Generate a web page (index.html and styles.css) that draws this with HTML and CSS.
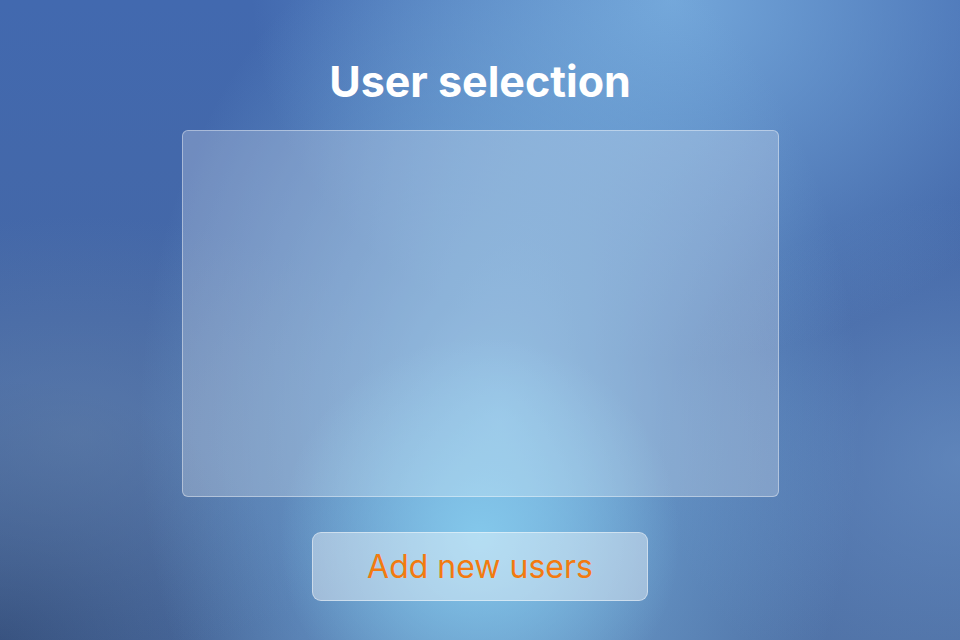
FILE: index.html
```html
<!DOCTYPE html>
<html lang="en">
<head>
  <meta charset="UTF-8" />
  <title>User selection</title>
  <link rel="stylesheet" href="styles.css">
</head>
<body>
  <div class="screen">
    <h1 class="title">User selection</h1>

    <div class="user-list">
      <!-- users go here -->
    </div>

    <button class="add-btn">Add new users</button>
  </div>
</body>
</html>
```

FILE: styles.css
```css
html, body {
  margin: 0;
  height: 100%;
}
body {
  font-family: Inter, "Noto Sans", sans-serif;
  background-color: #4a6fae;
  background-image:
    radial-gradient(ellipse 200px 200px at 50% 84%, rgba(134, 204, 238, 0.9), rgba(134, 204, 238, 0)),
    radial-gradient(ellipse 360px 520px at 52% 66%, rgba(128, 188, 230, 0.85), rgba(128, 188, 230, 0)),
    radial-gradient(ellipse 420px 360px at 70% 0%, rgba(118, 170, 220, 0.95), rgba(118, 170, 220, 0)),
    radial-gradient(ellipse 300px 260px at 100% 72%, rgba(110, 150, 200, 0.6), rgba(110, 150, 200, 0)),
    radial-gradient(ellipse 360px 220px at 8% 68%, rgba(100, 130, 170, 0.55), rgba(100, 130, 170, 0)),
    radial-gradient(ellipse 300px 260px at 0% 100%, rgba(48, 72, 115, 0.75), rgba(48, 72, 115, 0)),
    linear-gradient(180deg, #4269af 0%, #4467a6 50%, #4d6fa4 100%);
}
.screen {
  height: 100%;
  display: flex;
  flex-direction: column;
  align-items: center;
}
.title {
  margin: 55px 0 0;
  height: 75px;
  font-size: 43px;
  line-height: 52px;
  font-weight: 700;
  color: #fff;
}
.user-list {
  width: 595px;
  height: 365px;
  border: 1px solid rgba(255, 255, 255, 0.4);
  border-radius: 6px;
  background-color: rgba(255, 255, 255, 0.24);
}
.add-btn {
  margin-top: 35px;
  width: 336px;
  height: 69px;
  border: 1px solid rgba(255, 255, 255, 0.45);
  border-radius: 9px;
  background-color: rgba(255, 255, 255, 0.4);
  color: #f37a10;
  font-family: Inter, "Noto Sans", sans-serif;
  font-size: 32px;
  cursor: pointer;
}
```
